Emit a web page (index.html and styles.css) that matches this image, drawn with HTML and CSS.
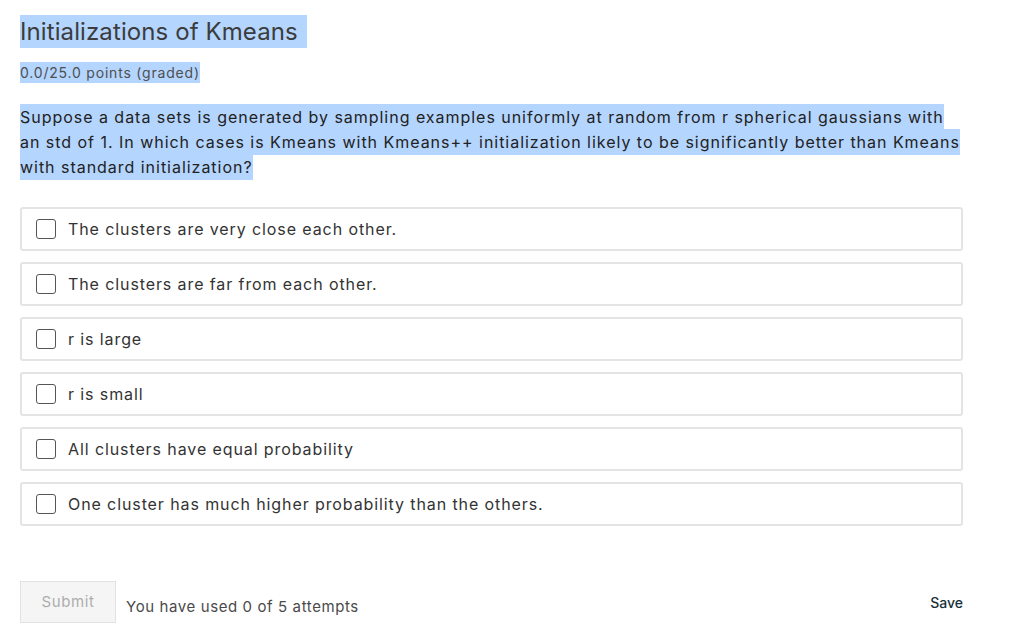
FILE: index.html
```html
<!DOCTYPE html>
<html>
<head>
<meta charset="utf-8">
<link rel="stylesheet" href="styles.css">
</head>
<body>
<div class="problem">
  <h2 class="title"><span class="sel">Initializations of Kmeans&nbsp;</span></h2>
  <div class="points"><span class="sel">0.0/25.0 points (graded)</span></div>
  <p class="question"><span class="sel">Suppose a data sets is generated by sampling examples uniformly at random from r spherical gaussians with an std of 1. In which cases is Kmeans with Kmeans++ initialization likely to be significantly better than Kmeans with standard initialization?</span></p>
  <div class="options">
    <label class="option"><span class="box"></span><span class="opt-text">The clusters are very close each other.</span></label>
    <label class="option"><span class="box"></span><span class="opt-text">The clusters are far from each other.</span></label>
    <label class="option"><span class="box"></span><span class="opt-text">r is large</span></label>
    <label class="option"><span class="box"></span><span class="opt-text">r is small</span></label>
    <label class="option"><span class="box"></span><span class="opt-text">All clusters have equal probability</span></label>
    <label class="option"><span class="box"></span><span class="opt-text">One cluster has much higher probability than the others.</span></label>
  </div>
  <div class="actions">
    <button class="submit">Submit</button>
    <span class="attempts">You have used 0 of 5 attempts</span>
    <span class="save">Save</span>
  </div>
</div>
</body>
</html>
```
FILE: styles.css
```css
html, body {
  margin: 0;
  padding: 0;
  background: #fff;
}
body {
  font-family: Inter, "Noto Sans", sans-serif;
  color: #313131;
}
.problem {
  width: 943px;
  padding: 15px 0 0 20px;
}
.sel {
  background: #b4d5fe;
}
.title {
  margin: 0;
  font-size: 24px;
  font-weight: 400;
  line-height: 33px;
  color: #3c3c3c;
  letter-spacing: 0.1px;
}
.title .sel {
  display: inline-block;
  padding-right: 2px;
}
.points {
  margin-top: 14px;
  font-size: 14px;
  line-height: 21px;
  color: #4f4f4f;
  letter-spacing: 0.8px;
}
.points .sel {
  display: inline-block;
}
.question {
  margin: 22px 0 0 0;
  font-size: 16px;
  line-height: 25px;
  color: #222;
  letter-spacing: 0.97px;
}
.question .sel {
  padding: 3px 0;
}
.options {
  margin-top: 27px;
  display: flex;
  flex-direction: column;
  gap: 11px;
}
.option {
  display: flex;
  align-items: center;
  height: 44px;
  box-sizing: border-box;
  border: 2px solid #e4e4e4;
  border-radius: 3px;
  padding-left: 14px;
  font-size: 16px;
  color: #333;
  letter-spacing: 0.9px;
}
.box {
  width: 20px;
  height: 20px;
  box-sizing: border-box;
  border: 1px solid #555;
  border-radius: 3px;
  margin-right: 12px;
  flex: none;
}
.actions {
  margin-top: 55px;
  display: flex;
  align-items: center;
}
.submit {
  width: 96px;
  height: 42px;
  background: #f5f5f5;
  border: 1px solid #e2e2e2;
  color: #adadad;
  font-family: Inter, sans-serif;
  font-size: 15px;
  letter-spacing: 0.6px;
  padding: 0 0 1px 0;
  border-radius: 0;
}
.attempts {
  margin-left: 10px;
  margin-top: 8px;
  font-size: 15px;
  color: #4a4a4a;
  letter-spacing: 0.6px;
}
.save {
  margin-left: auto;
  font-size: 14px;
  font-weight: 500;
  color: #17303a;
  margin-top: 0;
}
```
